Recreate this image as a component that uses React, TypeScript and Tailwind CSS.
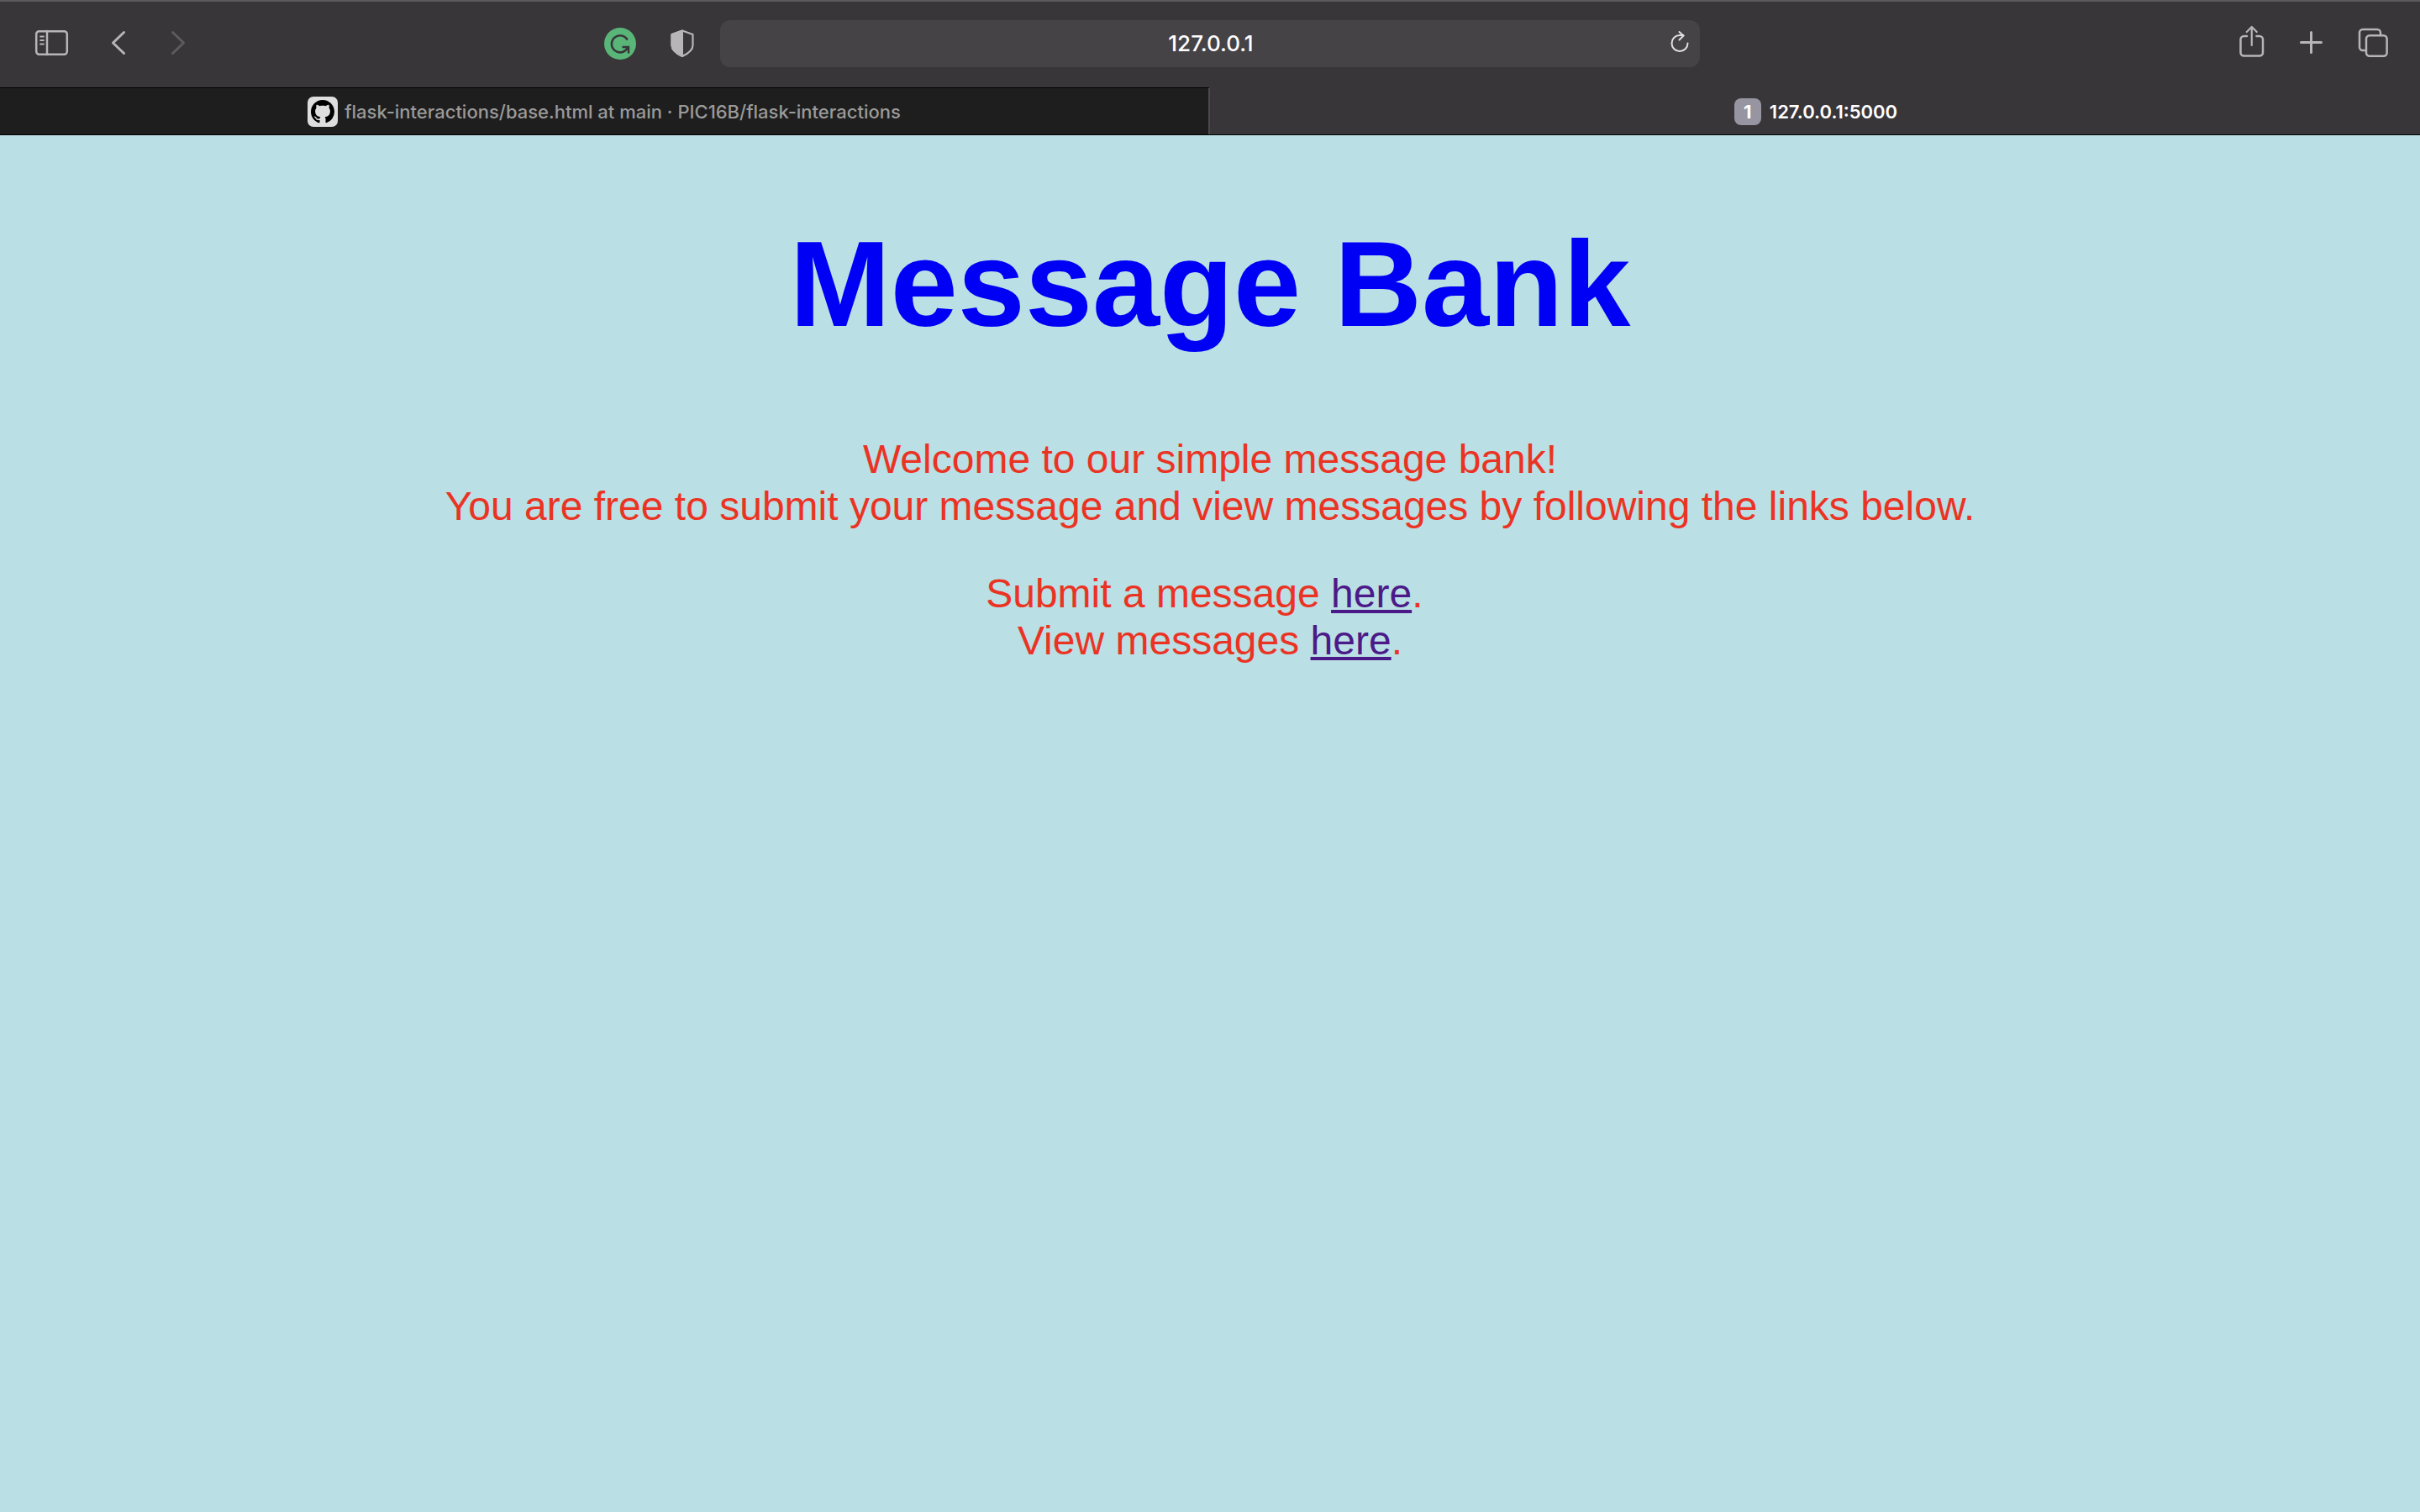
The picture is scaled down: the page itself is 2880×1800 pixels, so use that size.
import type { ReactNode } from "react";

type IconButtonProps = { label: string; children: ReactNode; width: number; disabled?: boolean; tone?: string };

function IconButton({ label, children, width, disabled, tone = "text-[#b8b5b9]" }: IconButtonProps) {
  return (
    <button type="button" aria-label={label} disabled={disabled} className={`shrink-0 ${tone}`}>
      <svg
        width={width}
        height="44"
        viewBox={`0 0 ${width} 44`}
        fill="none"
        stroke="currentColor"
        strokeWidth="2.5"
        strokeLinecap="round"
        strokeLinejoin="round"
        className="block"
        aria-hidden="true"
      >
        {children}
      </svg>
    </button>
  );
}

function Toolbar() {
  return (
    <div className="grid h-[104px] grid-cols-[1fr_minmax(0,1166px)_1fr] items-center gap-[30px] border-t-2 border-[#5b595c] bg-[#39363a] px-[38px] pb-0.5">
      <div className="flex items-center justify-between">
        <div className="flex items-center">
          <IconButton label="Show sidebar" width={48}>
            <rect x="5.2" y="7.2" width="36.6" height="27.6" rx="3.5" />
            <path d="M18 7v28" />
            <path d="M10 13.5h4M10 18h4M10 22.5h4" strokeWidth="1.8" />
          </IconButton>
          <div className="ml-10 flex items-center gap-8">
            <IconButton label="Back" width={40}>
              <path d="M21.5 8.5 8.5 21l13 12.5" strokeWidth="3" />
            </IconButton>
            <IconButton label="Forward" width={40} disabled tone="text-[#5d5b5e]">
              <path d="M7.5 8.5 20.5 21l-13 12.5" strokeWidth="3" />
            </IconButton>
          </div>
        </div>
        <div className="flex items-center gap-10">
          <IconButton label="Grammarly" width={38} tone="text-[#39363a]">
            <circle cx="19" cy="22" r="19" fill="#59b578" stroke="none" />
            <path d="M27.7 17.5A10 10 0 1 0 27.5 27.5" strokeLinecap="butt" strokeWidth="2.6" />
            <path d="M21.5 26h7.5v7.5M22 26h6l-1 3" strokeLinecap="butt" strokeLinejoin="miter" strokeWidth="2.4" />
          </IconButton>
          <IconButton label="Privacy report" width={30}>
            <path d="M15 6.5 27.5 11V24c0 5.500-6 10-12.500 13C8.500 34 2.500 29.500 2.500 24V11Z" strokeWidth="2.2" />
            <path d="M15 6.5V37C8.500 34 2.500 29.500 2.500 24V11Z" fill="currentColor" strokeWidth="2" />
          </IconButton>
        </div>
      </div>

      <div className="flex h-14 items-center rounded-xl bg-[#464347] pr-2.5">
        <input
          type="text"
          aria-label="Address"
          defaultValue="127.0.0.1"
          className="min-w-0 flex-1 bg-transparent pl-10 text-center font-['Inter',sans-serif] text-[26px] leading-8 font-medium text-white outline-none"
        />
        <IconButton label="Reload" width={28} tone="text-[#e0dfe0]">
          <path d="M23.500 21.500A9.500 9.500 0 1 1 14 12h4.500" strokeWidth="2" />
          <path d="M13.500 8l5 4.500-5 5" strokeWidth="2" />
        </IconButton>
      </div>

      <div className="flex items-center justify-end gap-8">
        <IconButton label="Share" width={40}>
          <path d="M16 13H12.500a4 4 0 0 0-4 4V32.500a4 4 0 0 0 4 4H31a4 4 0 0 0 4-4V17a4 4 0 0 0-4-4H27.500" />
          <path d="M21.750 24V2.500M15.750 8l6-6 6 6" strokeWidth="2.2" />
        </IconButton>
        <IconButton label="New tab" width={40}>
          <path d="M20.500 8.500v24M8.500 20.500h24" strokeWidth="3" />
        </IconButton>
        <IconButton label="Show all tabs" width={40}>
          <rect x="14" y="12.2" width="24.6" height="24.6" rx="4" />
          <path d="M31 12V9a4 4 0 0 0-4-4H10a4 4 0 0 0-4 4V26a4 4 0 0 0 4 4h3.500" />
        </IconButton>
      </div>
    </div>
  );
}

function GithubMark() {
  return (
    <svg width="36" height="36" viewBox="0 0 36 36" className="block shrink-0" aria-hidden="true">
      <rect width="36" height="36" rx="7" fill="#dedede" />
      <path
        transform="translate(4 4) scale(1.75)"
        fill="#000"
        d="M8 0C3.580 0 0 3.580 0 8c0 3.540 2.290 6.530 5.470 7.590.4.070.55-.17.55-.38 0-.19-.01-.82-.01-1.490-2.010.37-2.530-.49-2.690-.94-.09-.23-.48-.94-.82-1.130-.28-.15-.68-.52-.01-.53.63-.01 1.080.58 1.230.82.72 1.210 1.870.87 2.330.66.07-.52.28-.87.51-1.070-1.780-.2-3.640-.89-3.640-3.950 0-.87.31-1.590.82-2.150-.08-.2-.36-1.020.08-2.120 0 0 .67-.21 2.200.82.64-.18 1.320-.27 2-.27s1.360.09 2 .27c1.530-1.040 2.200-.82 2.200-.82.44 1.100.16 1.920.08 2.120.51.56.82 1.270.82 2.150 0 3.070-1.870 3.750-3.650 3.950.29.25.54.73.54 1.480 0 1.070-.01 1.930-.01 2.200 0 .21.15.46.55.38A8.010 8.010 0 0 0 16 8c0-4.420-3.580-8-8-8Z"
      />
    </svg>
  );
}

function TabBar() {
  return (
    <nav aria-label="Tabs" className="grid h-[57px] grid-cols-2 border-b border-black bg-[#39363a] font-['Inter',sans-serif] text-[22px] leading-7">
      <button
        type="button"
        className="flex items-center justify-center gap-2 border-t border-r-2 border-t-black border-r-[#4b494c] bg-[#1e1e1e] font-medium text-[#9a9a9a]"
      >
        <GithubMark />
        <span>flask-interactions/base.html at main · PIC16B/flask-interactions</span>
      </button>
      <button type="button" className="flex items-center justify-center gap-2.5 pt-0.5 pl-0.5 font-semibold text-white">
        <span className="flex size-8 items-center justify-center rounded-lg bg-[#9695a1] font-bold">1</span>
        <span>127.0.0.1:5000</span>
      </button>
    </nav>
  );
}

export default function App() {
  return (
    <div className="flex min-h-screen flex-col bg-[#badfe4]">
      <header>
        <Toolbar />
        <TabBar />
      </header>
      <main className="flex-1 px-8 pt-[94px] text-center font-['Liberation_Sans',Arial,sans-serif] text-5xl/14 text-[#eb3323]">
        <h1 className="text-[144px] leading-[168px] font-bold text-[#0000f5]">Message Bank</h1>
        <p className="mt-24">
          Welcome to our simple message bank!
          <br />
          You are free to submit your message and view messages by following the links below.
        </p>
        <p className="mt-12">
          Submit a message{" "}
          <a href="#submit" className="text-[#4b1a88] underline">
            here
          </a>
          .{"\u00a0"}
          <br />
          View messages{" "}
          <a href="#view" className="text-[#4b1a88] underline">
            here
          </a>
          .
        </p>
      </main>
    </div>
  );
}
